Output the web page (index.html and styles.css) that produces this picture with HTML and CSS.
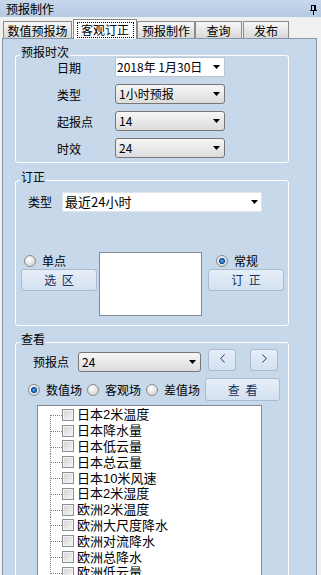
FILE: index.html
```html
<!DOCTYPE html>
<html lang="zh-CN">
<head>
<meta charset="utf-8">
<title>预报制作</title>
<link rel="stylesheet" href="styles.css">
</head>
<body>
<div class="titlebar">
  <span class="title">预报制作</span>
  <svg class="pin" width="7" height="10" viewBox="0 0 7 10" shape-rendering="crispEdges"><path d="M1 0h5v1h-5z M1 1h1v5h-1z M4 1h2v5h-2z M0 5h7v1h-7z M3 6h1v4h-1z" fill="#000"/></svg>
</div>
<div class="tabs">
  <div class="tab t1">数值预报场</div>
  <div class="tab t2 active"><span class="focus">客观订正</span></div>
  <div class="tab t3">预报制作</div>
  <div class="tab t4">查询</div>
  <div class="tab t5">发布</div>
</div>
<div class="panel">
  <div class="group g1">
    <div class="legend">预报时次</div>
    <div class="form-grid">
      <span class="lbl">日期</span>
      <div class="field white"><span>2018年 1月30日</span><i class="arrow"></i></div>
      <span class="lbl">类型</span>
      <div class="field"><span>1小时预报</span><i class="arrow"></i></div>
      <span class="lbl">起报点</span>
      <div class="field"><span>14</span><i class="arrow"></i></div>
      <span class="lbl">时效</span>
      <div class="field"><span>24</span><i class="arrow"></i></div>
    </div>
  </div>

  <div class="group g2">
    <div class="legend">订正</div>
    <div class="type-row">
      <span class="lbl2">类型</span>
      <div class="field white soft big"><span>最近24小时</span><i class="arrow"></i></div>
    </div>
    <div class="area-row">
      <div class="side">
        <label class="opt opt-left"><span class="radio"></span><span>单点</span></label>
        <button class="btn side-btn">选 区</button>
      </div>
      <div class="area-box"></div>
      <div class="side">
        <label class="opt opt-right"><span class="radio on"></span><span>常规</span></label>
        <button class="btn side-btn">订 正</button>
      </div>
    </div>
  </div>

  <div class="group g3">
    <div class="legend">查看</div>
    <div class="point-row">
      <span class="lbl3">预报点</span>
      <div class="field point"><span>24</span><i class="arrow"></i></div>
      <button class="btn nav prev"><svg width="5" height="9" viewBox="0 0 5 9"><polyline points="4.5,0.5 0.8,4.5 4.5,8.5" fill="none" stroke="#1b3a66" stroke-width="1"/></svg></button>
      <button class="btn nav next"><svg width="5" height="9" viewBox="0 0 5 9"><polyline points="0.5,0.5 4.2,4.5 0.5,8.5" fill="none" stroke="#1b3a66" stroke-width="1"/></svg></button>
    </div>
    <div class="view-row">
      <label class="opt"><span class="radio on"></span><span>数值场</span></label>
      <label class="opt"><span class="radio"></span><span>客观场</span></label>
      <label class="opt"><span class="radio"></span><span>差值场</span></label>
      <button class="btn view-btn">查 看</button>
    </div>
    <div class="tree">
      <ul>
        <li class="first"><i class="conn"></i><span class="cb"></span><span>日本2米温度</span></li>
        <li><i class="conn"></i><span class="cb"></span><span>日本降水量</span></li>
        <li><i class="conn"></i><span class="cb"></span><span>日本低云量</span></li>
        <li><i class="conn"></i><span class="cb"></span><span>日本总云量</span></li>
        <li><i class="conn"></i><span class="cb"></span><span>日本10米风速</span></li>
        <li><i class="conn"></i><span class="cb"></span><span>日本2米湿度</span></li>
        <li><i class="conn"></i><span class="cb"></span><span>欧洲2米温度</span></li>
        <li><i class="conn"></i><span class="cb"></span><span>欧洲大尺度降水</span></li>
        <li><i class="conn"></i><span class="cb"></span><span>欧洲对流降水</span></li>
        <li><i class="conn"></i><span class="cb"></span><span>欧洲总降水</span></li>
        <li><i class="conn"></i><span class="cb"></span><span>欧洲低云量</span></li>
      </ul>
    </div>
  </div>
</div>
</body>
</html>
```
FILE: styles.css
```css
html, body {
  margin: 0;
  padding: 0;
}
body {
  width: 321px;
  height: 575px;
  overflow: hidden;
  background: #f0f0f0;
  font-family: "Noto Sans CJK SC", "Noto Sans", sans-serif;
  font-size: 12px;
  line-height: 1.2;
  color: #000;
}

/* title bar */
.titlebar {
  height: 17px;
  box-sizing: border-box;
  display: flex;
  align-items: center;
  justify-content: space-between;
  padding: 0 4px 0 6px;
  background: linear-gradient(#c8d8ec, #b4c9e2);
  line-height: 17px;
}
.pin { display: block; margin-top: 2px; }

/* tabs */
.tabs {
  height: 21px;
  display: flex;
  align-items: flex-end;
  padding-left: 3px;
}
.tab {
  height: 17px;
  box-sizing: border-box;
  border: 1px solid #8b8b8b;
  border-bottom: none;
  background: linear-gradient(#f7f7f7, #d8d8d8);
  text-align: center;
  line-height: 16px;
  padding-top: 1px;
}
.t1 { width: 69px; }
.t2 { width: 64px; margin-left: 1px; }
.t3 { width: 58px; }
.t4 { width: 47px; }
.t5 { width: 46px; margin-left: 1px; }
.tab.active {
  position: relative;
  height: 20px;
  margin-bottom: -1px;
  background: #fff;
  padding-top: 2px;
  display: flex;
  justify-content: center;
  align-items: flex-start;
}
.focus {
  display: block;
  width: 57px;
  height: 16px;
  box-sizing: border-box;
  border: 1px dotted #000;
  line-height: 14px;
}

/* panel */
.panel {
  margin-left: 2px;
  width: 315px;
  height: 540px;
  box-sizing: border-box;
  border: 1px solid #8596aa;
  background: #c7d8ea;
  padding-left: 12px;
  overflow: hidden;
}
.group {
  width: 274px;
  box-sizing: border-box;
  border: 1px solid #fff;
  border-radius: 3px;
}
.legend {
  width: max-content;
  height: 14px;
  line-height: 14px;
  margin: -11px 0 0 4px;
  padding: 0 1px;
  background: #c7d8ea;
}

/* group 1 */
.g1 { margin-top: 16px; padding-bottom: 4px; }
.form-grid {
  margin-top: -2px;
  padding-left: 41px;
  display: grid;
  grid-template-columns: 58px 110px;
  grid-auto-rows: 20px;
  row-gap: 7px;
  align-items: center;
}
.lbl { line-height: 18px; padding-top: 2px; }

.field {
  height: 20px;
  box-sizing: border-box;
  display: flex;
  align-items: center;
  justify-content: space-between;
  padding: 0 4px 0 3px;
  border: 1px solid #777;
  border-radius: 3px;
  background: linear-gradient(#f6f6f6, #dcdcdc);
  white-space: nowrap;
  line-height: 16px;
}
.field.white {
  background: #fff;
  border-color: #b9c4d0;
  border-radius: 1px;
  padding-left: 1px;
}
.field.soft { border-color: #dde4ec; padding-right: 3px; }
.field.big { font-size: 13px; padding-left: 2px; }
.arrow {
  display: block;
  width: 7px;
  height: 4px;
  background: #000;
  clip-path: polygon(0 0, 100% 0, 50% 100%);
  flex: none;
}

/* group 2 */
.g2 { margin-top: 17px; padding-bottom: 9px; }
.type-row {
  margin-top: 8px;
  padding-left: 12px;
  display: flex;
  align-items: center;
}
.lbl2 { width: 34px; line-height: 16px; }
.type-row .field { width: 200px; }

.area-row {
  margin-top: 40px;
  padding-left: 5px;
  display: flex;
  align-items: flex-start;
}
.side {
  width: 76px;
  display: flex;
  flex-direction: column;
}
.area-box {
  width: 103px;
  height: 64px;
  box-sizing: border-box;
  margin: 0 6px 0 2px;
  background: #fff;
  border: 1px solid #828a94;
}
.opt {
  display: flex;
  align-items: center;
  gap: 6px;
  height: 17px;
  line-height: 16px;
  white-space: nowrap;
}
.opt-left { margin-left: 3px; }
.opt-right { margin-left: 8px; }
.side-btn { margin-top: 19px; width: 76px; height: 22px; }

.radio {
  width: 12px;
  height: 12px;
  box-sizing: border-box;
  border-radius: 50%;
  border: 1px solid #8c8c8c;
  background: radial-gradient(circle at 40% 35%, #ffffff 0, #ececec 35%, #c9c9c9 100%);
  flex: none;
}
.radio.on {
  background:
    radial-gradient(circle at 50% 50%, #8fd0ff 0, #2a7fd0 1.2px, #0d4f9c 2.8px, rgba(13,79,156,0) 3.3px),
    radial-gradient(circle at 40% 35%, #ffffff 0, #ececec 35%, #c9c9c9 100%);
}

.btn {
  box-sizing: border-box;
  margin: 0;
  padding: 0;
  border: 1px solid #a8bbd2;
  border-radius: 3px;
  background: linear-gradient(#e6eef8, #d4e1f1);
  color: #16325c;
  font-family: inherit;
  font-size: 12px;
  line-height: 16px;
  display: flex;
  align-items: center;
  justify-content: center;
  word-spacing: 3px;
}

/* group 3 */
.g3 { margin-top: 16px; height: 300px; }
.point-row {
  margin-top: 3px;
  padding-left: 17px;
  display: flex;
  align-items: flex-start;
}
.lbl3 { width: 45px; line-height: 20px; margin-top: 3px; }
.field.point { width: 123px; margin-top: 3px; }
.nav { width: 28px; height: 22px; padding-bottom: 3px; }
.prev { margin-left: 7px; }
.next { margin-left: 14px; }
.nav svg { display: block; }

.view-row {
  margin-top: 6px;
  padding-left: 12px;
  display: flex;
  align-items: center;
  gap: 5px;
}
.view-row .opt { height: 23px; }
.view-btn { width: 75px; height: 23px; margin-left: 0; }

.tree {
  margin: 4px 0 0 21px;
  width: 225px;
  height: 200px;
  box-sizing: border-box;
  background: #fff;
  border: 1px solid #828a94;
  padding: 1px 0 0 12px;
  font-family: "Liberation Sans", "Noto Sans CJK SC", sans-serif;
  font-size: 13px;
  line-height: 15px;
}
.tree ul {
  list-style: none;
  margin: 0;
  padding: 0;
}
.tree li {
  display: flex;
  align-items: center;
  height: 15.8px;
  line-height: 15px;
  white-space: nowrap;
}
.conn {
  display: block;
  flex: none;
  width: 12px;
  height: 16px;
  background:
    repeating-linear-gradient(to right, #7f7f7f 0 1px, transparent 1px 2px) 1px 8px / 11px 1px no-repeat,
    repeating-linear-gradient(to bottom, #7f7f7f 0 1px, transparent 1px 2px) 0 0 / 1px 16px no-repeat;
}
.tree li.first .conn {
  background:
    repeating-linear-gradient(to right, #7f7f7f 0 1px, transparent 1px 2px) 1px 8px / 11px 1px no-repeat,
    repeating-linear-gradient(to bottom, #7f7f7f 0 1px, transparent 1px 2px) 0 8px / 1px 8px no-repeat;
}
.cb {
  flex: none;
  width: 12px;
  height: 12px;
  box-sizing: border-box;
  border: 1px solid #8e8f8f;
  background: linear-gradient(135deg, #d2d2d2, #f7f7f7);
  box-shadow: inset 0 0 0 1px #f2f2f2;
  margin-right: 3px;
}
```
